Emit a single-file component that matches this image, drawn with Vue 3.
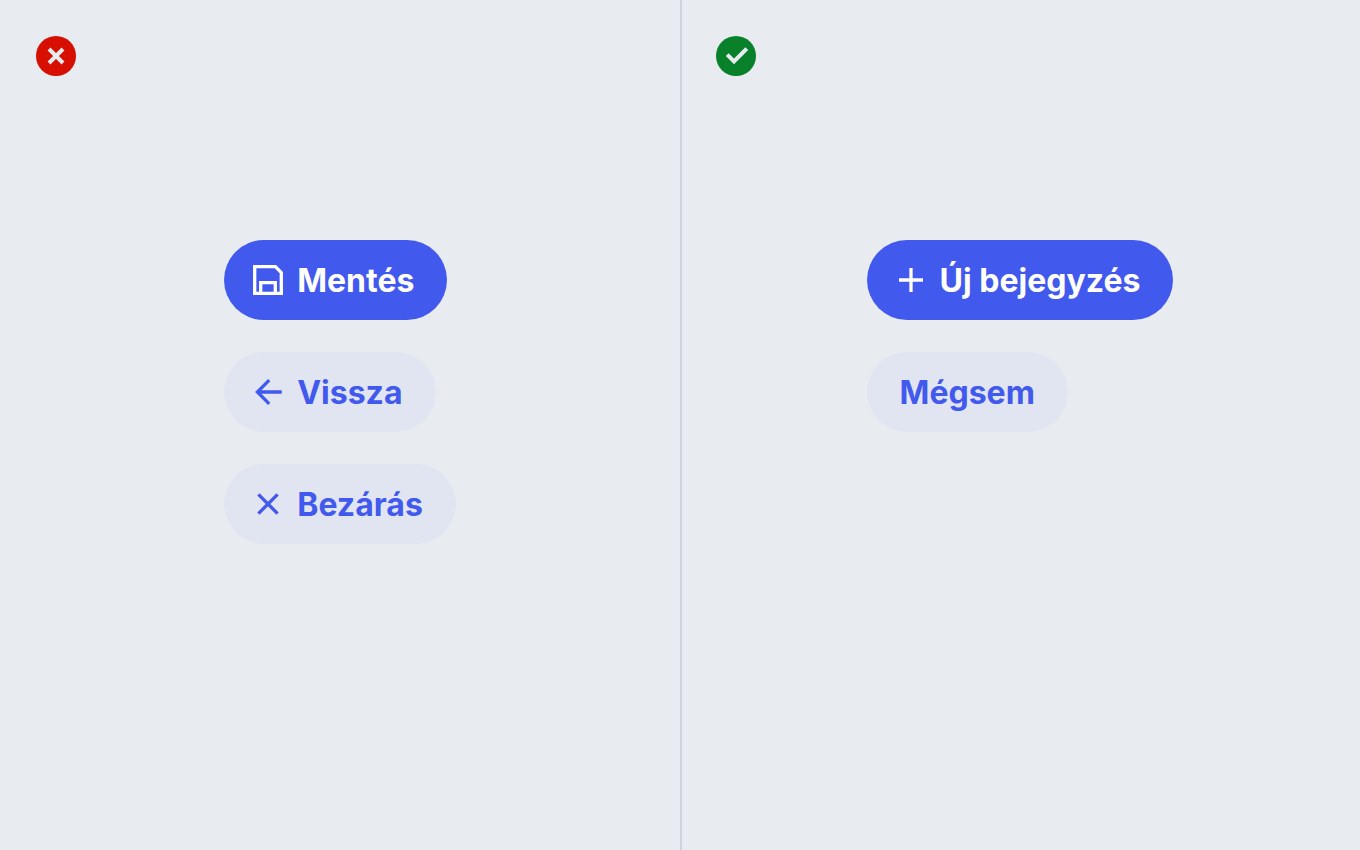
<script setup>
const panels = [
  {
    kind: 'bad',
    label: 'Helytelen',
    badge: 'M13 13 27 27M27 13 13 27',
    buttons: [
      { text: 'Mentés', primary: true, icon: 'M6.7 6.7H27.4L33.3 12.6V33.3H6.7ZM12.7 33.3V22.7H27.3V33.3' },
      { text: 'Vissza', icon: 'M33.7 20H9M21.2 8.2 9.4 20 21.2 31.8' },
      { text: 'Bezárás', icon: 'M10.4 10.4 29.6 29.6M29.6 10.4 10.4 29.6' },
    ],
  },
  {
    kind: 'good',
    label: 'Helyes',
    badge: 'M11.2 18.6 18 25.4 30.8 12.6',
    buttons: [
      { text: 'Új bejegyzés', primary: true, icon: 'M8 20H32M20 8V32' },
      { text: 'Mégsem' },
    ],
  },
]
</script>

<template>
  <main class="board">
    <section v-for="panel in panels" :key="panel.kind" class="panel" :aria-label="panel.label">
      <svg class="badge" :class="panel.kind" viewBox="0 0 40 40" aria-hidden="true">
        <circle cx="20" cy="20" r="20" />
        <path :d="panel.badge" />
      </svg>
      <div class="buttons">
        <button
          v-for="button in panel.buttons"
          :key="button.text"
          type="button"
          class="button"
          :class="{ primary: button.primary, 'with-icon': button.icon }"
        >
          <svg v-if="button.icon" class="icon" viewBox="0 0 40 40" aria-hidden="true">
            <path :d="button.icon" />
          </svg>
          <span class="text">{{ button.text }}</span>
        </button>
      </div>
    </section>
  </main>
</template>

<style>
body {
  background: #e8ecf1;
}
</style>

<style scoped>
.board {
  display: grid;
  grid-template-columns: 1fr 1fr;
  min-height: 100vh;
  background: #e8ecf1;
  font-family: Inter, "Liberation Sans", sans-serif;
}

.panel {
  display: flex;
  flex-direction: column;
  gap: 164px;
  padding: 36px;
}

.panel + .panel {
  box-shadow: inset 2px 0 #ced3dc;
}

.badge {
  width: 40px;
  height: 40px;
}

.badge path {
  fill: none;
  stroke: #e8ecf1;
  stroke-width: 4;
}

.bad circle {
  fill: #d60f00;
}

.good circle {
  fill: #08812a;
}

.buttons {
  display: flex;
  flex-direction: column;
  align-items: flex-start;
  align-self: center;
  gap: 32px;
}

.button {
  display: flex;
  align-items: center;
  gap: 8px;
  height: 80px;
  padding: 0 32px;
  border: 0;
  border-radius: 40px;
  background: #e1e5f2;
  color: #4259ed;
  font: inherit;
  font-size: 32px;
  font-weight: 700;
  line-height: 40px;
  white-space: nowrap;
  cursor: pointer;
}

.with-icon {
  padding-left: 24px;
}

.primary {
  background: #4259ed;
  color: #fff;
}

.text {
  padding: 2px 1px 0;
}

.icon {
  width: 40px;
  height: 40px;
}

.icon path {
  fill: none;
  stroke: currentColor;
  stroke-width: 3.3;
}
</style>
